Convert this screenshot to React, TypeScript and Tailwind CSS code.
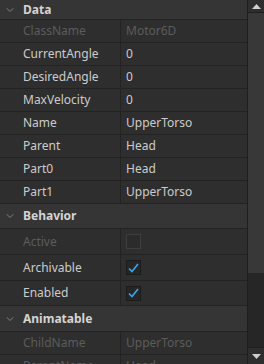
import { ChevronDown } from 'lucide-react';

type Row = { name: string; value?: string; check?: boolean; disabled?: boolean; h: string };

const font = { fontFamily: '"Noto Sans", "Liberation Sans", sans-serif' };

function Header({ title, h }: { title: string; h: string }) {
  return (
    <div className={`flex shrink-0 items-center ${h} bg-[#353535] border-b border-[#232323]`}>
      <ChevronDown className="w-3 h-3 ml-[4px] text-[#8a8a8a]" strokeWidth={1.75} />
      <span className="ml-[7px] text-[12px] font-bold text-[#d4d4d4]">{title}</span>
    </div>
  );
}

function Prop({ row }: { row: Row }) {
  const color = row.disabled ? 'text-[#5c5c5c]' : 'text-[#cccccc]';
  return (
    <div className={`flex shrink-0 ${row.h} bg-[#2e2e2e] border-b border-[#232323]`}>
      <div className={`w-[121px] shrink-0 flex items-center pl-[23px] border-r border-[#232323] text-[12px] ${color}`}>
        {row.name}
      </div>
      <div className={`flex-1 flex items-center pl-[5px] text-[12px] ${color}`}>
        {row.check === undefined ? (
          row.value
        ) : (
          <div
            className={`w-[15px] h-[15px] border flex items-center justify-center ${
              row.disabled ? 'border-[#3e3e3e] bg-[#2b2b2b]' : 'border-[#1c1c1c] bg-[#262626]'
            }`}
          >
            {row.check && (
              <svg width="11" height="10" viewBox="0 0 11 10">
                <path d="M1 5.5 L4 8.5 L10 1" fill="none" stroke="#35a9f0" strokeWidth="1.6" />
              </svg>
            )}
          </div>
        )}
      </div>
    </div>
  );
}

const data: Row[] = [
  { name: 'ClassName', value: 'Motor6D', disabled: true, h: 'h-[23px]' },
  { name: 'CurrentAngle', value: '0', h: 'h-[23px]' },
  { name: 'DesiredAngle', value: '0', h: 'h-[23px]' },
  { name: 'MaxVelocity', value: '0', h: 'h-[23px]' },
  { name: 'Name', value: 'UpperTorso', h: 'h-[23px]' },
  { name: 'Parent', value: 'Head', h: 'h-[23px]' },
  { name: 'Part0', value: 'Head', h: 'h-[23px]' },
  { name: 'Part1', value: 'UpperTorso', h: 'h-[23px]' },
];

const behavior: Row[] = [
  { name: 'Active', check: false, disabled: true, h: 'h-[26px]' },
  { name: 'Archivable', check: true, h: 'h-[26px]' },
  { name: 'Enabled', check: true, h: 'h-[25px]' },
];

const animatable: Row[] = [
  { name: 'ChildName', value: 'UpperTorso', disabled: true, h: 'h-[23px]' },
  { name: 'ParentName', value: 'Head', disabled: true, h: 'h-[23px]' },
];

export default function App() {
  return (
    <div className="w-[264px] h-[364px] overflow-hidden flex bg-[#2e2e2e]" style={font}>
      <div className="flex-1 flex flex-col overflow-hidden">
        <Header title="Data" h="h-[20px]" />
        {data.map((r) => (
          <Prop key={r.name} row={r} />
        ))}
        <Header title="Behavior" h="h-[25px]" />
        {behavior.map((r) => (
          <Prop key={r.name} row={r} />
        ))}
        <Header title="Animatable" h="h-[26px]" />
        {animatable.map((r) => (
          <Prop key={r.name} row={r} />
        ))}
      </div>

      {/* Scrollbar */}
      <div className="w-[17px] shrink-0 flex flex-col bg-[#262626] border-l border-[#1e1e1e]">
        <div className="h-[13px] shrink-0 flex items-center justify-center bg-[#2e2e2e] border-b border-[#1e1e1e]">
          <svg width="9" height="5" viewBox="0 0 9 5">
            <path d="M0 5 L4.5 0 L9 5 Z" fill="#cfcfcf" />
          </svg>
        </div>
        <div className="h-[260px] shrink-0 bg-[#383838]" />
        <div className="flex-1" />
        <div className="h-[17px] shrink-0 flex items-center justify-center bg-[#2e2e2e] border-t border-[#1e1e1e]">
          <svg width="9" height="5" viewBox="0 0 9 5">
            <path d="M0 0 L9 0 L4.5 5 Z" fill="#cfcfcf" />
          </svg>
        </div>
      </div>
    </div>
  );
}
